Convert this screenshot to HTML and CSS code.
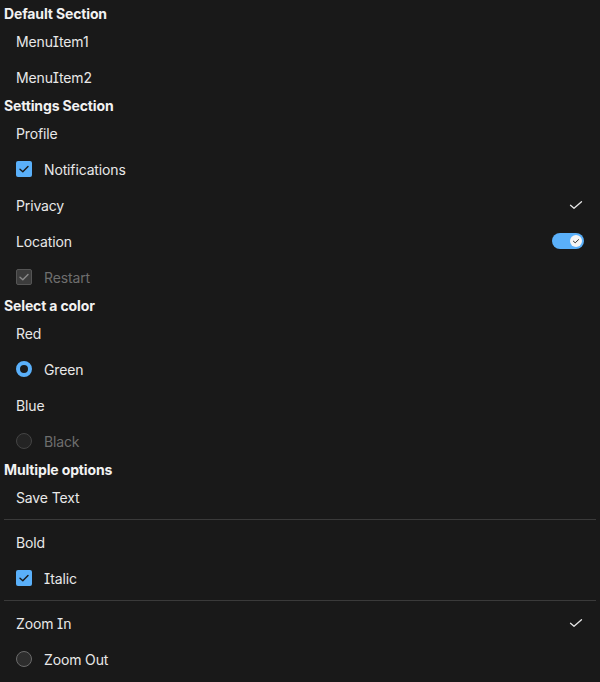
FILE: index.html
```html
<!DOCTYPE html>
<html>
<head>
<meta charset="utf-8">
<link rel="stylesheet" href="styles.css">
</head>
<body>
<div class="menu">
  <div class="section-title">Default Section</div>
  <div class="item"><span class="label">MenuItem1</span></div>
  <div class="item"><span class="label">MenuItem2</span></div>

  <div class="section-title">Settings Section</div>
  <div class="item"><span class="label">Profile</span></div>
  <div class="item">
    <span class="checkbox checked"><svg viewBox="0 0 16 16"><path d="M4 8.2 L6.8 10.8 L12 5.4" fill="none" stroke="#1a1a1a" stroke-width="1.4" stroke-linecap="round" stroke-linejoin="round"/></svg></span>
    <span class="label">Notifications</span>
  </div>
  <div class="item">
    <span class="label">Privacy</span>
    <svg class="tick" viewBox="0 0 16 16"><path d="M2.5 8.3 L6 11.3 L13.5 4.7" fill="none" stroke="#e6e6e6" stroke-width="1.3" stroke-linecap="round" stroke-linejoin="round"/></svg>
  </div>
  <div class="item">
    <span class="label">Location</span>
    <span class="toggle"><span class="thumb"><svg viewBox="0 0 12 12"><path d="M3.4 6.2 L5.2 7.8 L8.6 4.6" fill="none" stroke="#333" stroke-width="1" stroke-linecap="round" stroke-linejoin="round"/></svg></span></span>
  </div>
  <div class="item disabled">
    <span class="checkbox dis"><svg viewBox="0 0 16 16"><path d="M4 8.2 L6.8 10.8 L12 5.4" fill="none" stroke="#8a8a8a" stroke-width="1.4" stroke-linecap="round" stroke-linejoin="round"/></svg></span>
    <span class="label">Restart</span>
  </div>

  <div class="section-title">Select a color</div>
  <div class="item"><span class="label">Red</span></div>
  <div class="item"><span class="radio on"></span><span class="label">Green</span></div>
  <div class="item"><span class="label">Blue</span></div>
  <div class="item disabled"><span class="radio off dim"></span><span class="label">Black</span></div>

  <div class="section-title">Multiple options</div>
  <div class="item"><span class="label">Save Text</span></div>
  <div class="divider"></div>
  <div class="item"><span class="label">Bold</span></div>
  <div class="item">
    <span class="checkbox checked"><svg viewBox="0 0 16 16"><path d="M4 8.2 L6.8 10.8 L12 5.4" fill="none" stroke="#1a1a1a" stroke-width="1.4" stroke-linecap="round" stroke-linejoin="round"/></svg></span>
    <span class="label">Italic</span>
  </div>
  <div class="divider"></div>
  <div class="item">
    <span class="label">Zoom In</span>
    <svg class="tick" viewBox="0 0 16 16"><path d="M2.5 8.3 L6 11.3 L13.5 4.7" fill="none" stroke="#e6e6e6" stroke-width="1.3" stroke-linecap="round" stroke-linejoin="round"/></svg>
  </div>
  <div class="item"><span class="radio off"></span><span class="label">Zoom Out</span></div>
</div>
</body>
</html>
```
FILE: styles.css
```css
html, body {
  margin: 0;
  padding: 0;
  background: #191919;
}
body {
  font-family: Inter, "Noto Sans", sans-serif;
  font-size: 14px;
  color: #e8e8e8;
  letter-spacing: -0.01em;
  font-feature-settings: "cv08" 1;
}
.menu {
  padding: 3px 4px 4px;
  display: flex;
  flex-direction: column;
}
.section-title {
  height: 20px;
  line-height: 22px;
  font-weight: 700;
  color: #f2f2f2;
}
.item {
  height: 36px;
  display: flex;
  align-items: center;
  padding: 0 12px;
  gap: 12px;
}
.item .label {
  flex: 1;
}
.item.disabled {
  color: #6e6e6e;
}
.checkbox {
  width: 16px;
  height: 16px;
  border-radius: 2px;
  box-sizing: border-box;
  display: flex;
  flex: none;
}
.checkbox svg {
  width: 16px;
  height: 16px;
}
.checkbox.checked {
  background: #5ab0fa;
}
.checkbox.dis {
  background: #3c3c3c;
  border: 1px solid #555;
}
.checkbox.dis svg {
  margin: -1px;
}
.tick {
  width: 16px;
  height: 16px;
  flex: none;
}
.toggle {
  width: 32px;
  height: 16px;
  border-radius: 8px;
  background: #5ab0fa;
  display: flex;
  align-items: center;
  justify-content: flex-end;
  padding: 0 2px;
  box-sizing: border-box;
  flex: none;
}
.thumb {
  width: 12px;
  height: 12px;
  border-radius: 50%;
  background: #f5f5f5;
  display: flex;
}
.thumb svg {
  width: 12px;
  height: 12px;
}
.radio {
  width: 16px;
  height: 16px;
  border-radius: 50%;
  box-sizing: border-box;
  flex: none;
}
.radio.on {
  background: #1a1a1a;
  border: 4px solid #5ab0fa;
}
.radio.off {
  background: #2d2d2d;
  border: 1px solid #6a6a6a;
}
.radio.off.dim {
  background: #242424;
  border-color: #444;
}
.divider {
  height: 1px;
  background: #3a3a3a;
  margin: 4px 0;
}
```
